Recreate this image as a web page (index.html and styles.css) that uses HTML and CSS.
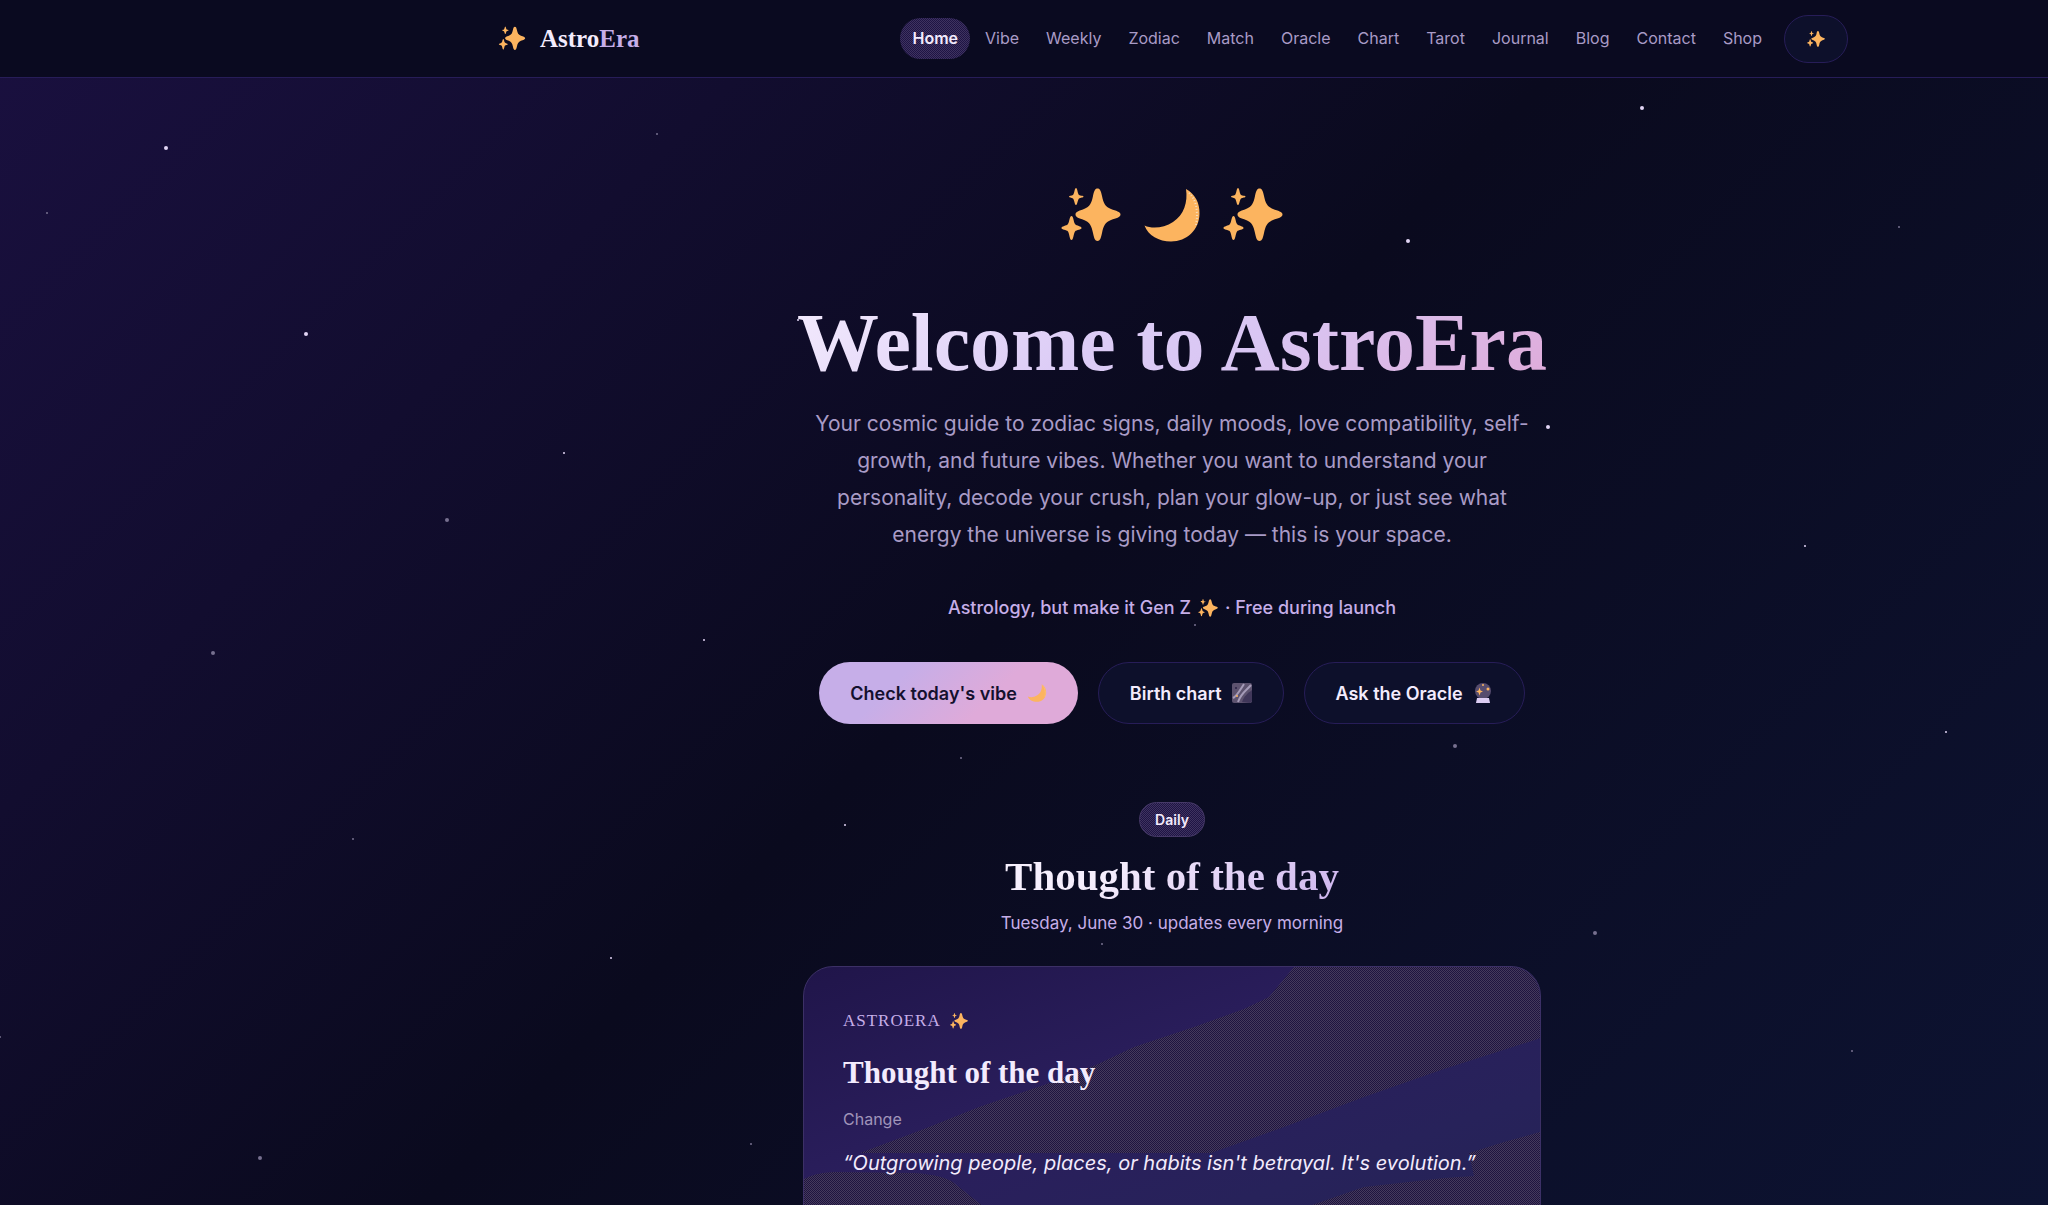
FILE: index.html
```html
<!DOCTYPE html>
<html lang="en">
<head>
    <meta charset="UTF-8">
    <meta name="viewport" content="width=device-width, initial-scale=1.0">
    <title>AstroEra</title>
    <link rel="stylesheet" href="styles.css">
</head>
<body>

    <!-- Shared icons -->
    <svg class="sprite" aria-hidden="true">
        <symbol id="sparkles" viewBox="0 0 60 56">
            <path d="M36.500 1.500C39 1.500 40 4 41 9C42.500 16 44 19.500 50 22C55 24 59.500 24.500 59.500 27.500C59.500 30.500 55 31 50 33C44 35.500 42.500 39 41 46C40 51 39 54 36.500 54C34 54 33 51 32 46C30.500 39 29 35.500 23 33C18 31 14.500 30.500 14.500 27.500C14.500 24.500 18 24 23 22C29 19.500 30.500 16 32 9C33 4 34 1.500 36.500 1.500Z"/>
            <path d="M15 1C16.500 1 16.500 6.500 18 8C19.500 9 22.500 8.500 22.500 9.500C22.500 10.700 19.500 10.500 18 11.500C16.500 13 16.500 18 15 18C13.500 18 13.500 13 12 11.500C10.500 10.500 8 10.700 8 9.500C8 8.500 10.500 9 12 8C13.500 6.500 13.500 1 15 1Z"/>
            <path d="M10.500 29C12.500 29 12.500 35 14 37C15.500 39 20.500 39 20.500 41C20.500 43 15.500 42.500 14 44.500C12.500 46.500 12.500 53 10.500 53C8.500 53 8.500 46.500 7 44.500C5.500 42.500 .500 43 .500 41C.500 39 5.500 39 7 37C8.500 35 8.500 29 10.500 29Z"/>
        </symbol>
        <symbol id="moon" viewBox="0 0 60 56">
            <path d="M44 2C53 7 58 16 57.500 27C57 43 45 54.500 29 54.500C17 54.500 6 48.500 2.500 38.500C10 42 22 41 31 35C42 28 46 15 44 2Z"/>
            <path class="moon-rim" d="M47 6C54 12 56.500 24 54 38" fill="none"/>
        </symbol>
        <symbol id="galaxy" viewBox="0 0 20 20">
            <rect width="20" height="20" rx="2" fill="#5d536f"/>
            <path d="M1 15C5 13 8 7 12 1M6 19C9 10 14 8 19 2" stroke="#a59bb8" stroke-width="2" fill="none"/>
            <path d="M10 19C12 13 16 10 20 7V18L18 20Z" fill="#40375a"/>
            <circle cx="5" cy="13" r="1" fill="#fcb45f"/>
            <circle cx="4" cy="5" r="1" fill="#2a2145"/>
        </symbol>
        <symbol id="crystal" viewBox="0 0 20 20">
            <circle cx="10" cy="8" r="8" fill="#564c6e"/>
            <path d="M4 15H16L17 20H3Z" fill="#dccdf3"/>
            <path d="M6.500 4.500L7.500 7.500L10 8.500L7.500 9.500L6.500 12.500L5.500 9.500L3 8.500L5.500 7.500Z" fill="#fcb45f"/>
            <circle cx="15" cy="6" r="1.500" fill="#fcb45f"/>
            <circle cx="10" cy="2" r="1" fill="#fcb45f"/>
        </symbol>
    </svg>

    <!-- Star field -->
    <svg class="stars" aria-hidden="true">
        <g class="star-bright">
            <circle cx="166" cy="148" r="2"/>
            <circle cx="306" cy="334" r="2"/>
            <circle cx="1408" cy="241" r="2"/>
            <circle cx="1642" cy="108" r="2"/>
            <circle cx="564" cy="453" r="1"/>
            <circle cx="1548" cy="427" r="2"/>
            <circle cx="1805" cy="546" r="1"/>
            <circle cx="704" cy="640" r="1"/>
            <circle cx="1946" cy="732" r="1"/>
            <circle cx="845" cy="825" r="1"/>
            <circle cx="611" cy="958" r="1"/>
            <circle cx="798" cy="320" r="1"/>
        </g>
        <g class="star-dim">
            <circle cx="447" cy="520" r="2"/>
            <circle cx="213" cy="653" r="2"/>
            <circle cx="1455" cy="746" r="2"/>
            <circle cx="1595" cy="933" r="2"/>
            <circle cx="260" cy="1158" r="2"/>
            <circle cx="353" cy="839" r="1"/>
            <circle cx="657" cy="134" r="1"/>
            <circle cx="47" cy="213" r="1"/>
            <circle cx="1899" cy="227" r="1"/>
            <circle cx="1195" cy="625" r="1"/>
            <circle cx="961" cy="758" r="1"/>
            <circle cx="1102" cy="944" r="1"/>
            <circle cx="1852" cy="1051" r="1"/>
            <circle cx="751" cy="1144" r="1"/>
            <circle cx="0" cy="1037" r="1"/>
        </g>
    </svg>

    <header class="site-header">
        <div class="header-inner">
            <a href="#" class="logo">
                <svg class="logo-icon" aria-hidden="true"><use href="#sparkles"/></svg>
                <span>Astro<span class="logo-accent">Era</span></span>
            </a>
            <nav class="nav">
                <a href="#" class="active">Home</a>
                <a href="#">Vibe</a>
                <a href="#">Weekly</a>
                <a href="#">Zodiac</a>
                <a href="#">Match</a>
                <a href="#">Oracle</a>
                <a href="#">Chart</a>
                <a href="#">Tarot</a>
                <a href="#">Journal</a>
                <a href="#">Blog</a>
                <a href="#">Contact</a>
                <a href="#">Shop</a>
                <button type="button" class="theme-toggle" aria-label="Toggle theme">
                    <svg class="icon-sm" aria-hidden="true"><use href="#sparkles"/></svg>
                </button>
            </nav>
        </div>
    </header>

    <main class="main">
        <section class="hero">
            <div class="hero-icons">
                <svg class="icon-lg" aria-hidden="true"><use href="#sparkles"/></svg>
                <svg class="icon-lg" aria-hidden="true"><use href="#moon"/></svg>
                <svg class="icon-lg" aria-hidden="true"><use href="#sparkles"/></svg>
            </div>
            <h1>Welcome to AstroEra</h1>
            <p class="hero-text">Your cosmic guide to zodiac signs, daily moods, love compatibility, self-<br>growth, and future vibes. Whether you want to understand your<br>personality, decode your crush, plan your glow-up, or just see what<br>energy the universe is giving today — this is your space.</p>
            <p class="tagline">Astrology, but make it Gen Z <svg class="icon-md" aria-hidden="true"><use href="#sparkles"/></svg> · Free during launch</p>
            <div class="hero-buttons">
                <a href="#" class="btn btn-primary">Check today's vibe <svg class="icon-md" aria-hidden="true"><use href="#moon"/></svg></a>
                <a href="#" class="btn">Birth chart <svg class="icon-md" aria-hidden="true"><use href="#galaxy"/></svg></a>
                <a href="#" class="btn">Ask the Oracle <svg class="icon-md" aria-hidden="true"><use href="#crystal"/></svg></a>
            </div>
        </section>

        <section class="thought">
            <span class="badge">Daily</span>
            <h2>Thought of the day</h2>
            <p class="date">Tuesday, June 30 · updates every morning</p>

            <article class="card">
                <svg class="card-texture" aria-hidden="true">
                    <defs>
                        <pattern id="grain" width="2" height="2" patternUnits="userSpaceOnUse">
                            <rect width="2" height="2" fill="#1e143f"/>
                            <rect width="1" height="1" fill="#453a5c"/>
                            <rect x="1" y="1" width="1" height="1" fill="#453a5c"/>
                        </pattern>
                    </defs>
                    <path d="M56 186L120 162L175 140L240 118L294 97L330 80L390 60L440 42L465 30L490 0H740V70L640 102L560 130L480 160L407 186Z"/>
                    <path d="M0 212Q10 206 30 205L110 206Q140 208 150 216L180 240V400H0Z"/>
                    <path d="M460 260L508 238L560 220L640 211L670 209L665 186L700 175L740 164V400H460Z"/>
                </svg>
                <div class="card-body">
                    <p class="card-brand">ASTROERA <svg class="icon-sm" aria-hidden="true"><use href="#sparkles"/></svg></p>
                    <h3>Thought of the day</h3>
                    <p class="card-topic">Change</p>
                    <p class="card-quote">“Outgrowing people, places, or habits isn't betrayal. It's evolution.”</p>
                </div>
            </article>
        </section>
    </main>

</body>
</html>
```
FILE: styles.css
```css
* {
    box-sizing: border-box;
    margin: 0;
    padding: 0;
}

:root {
    --sans: Inter, "Open Sans", sans-serif;
    --serif: "Liberation Serif", serif;
    --gold: #fcb45f;
    --lavender: #c6aee8;
    --pink: #dfaad9;
    --text: #f3ebfd;
    --muted: #a99bc6;
    --line: #271d58;
}

body {
    height: 100vh;
    overflow: hidden;
    font-family: var(--sans);
    color: var(--text);
    background: linear-gradient(135deg, #1a1040 0%, #0a0a1e 50%, #0d1332 100%);
}

a {
    color: inherit;
    text-decoration: none;
}

svg {
    fill: var(--gold);
}

.sprite {
    position: absolute;
    width: 0;
    height: 0;
}

.stars {
    position: absolute;
    inset: 0;
    width: 100%;
    height: 100%;
}

.star-bright {
    fill: #e2d5f5;
}

.star-dim {
    fill: #77708f;
}

/* Icon sizes */
.icon-sm {
    width: 18px;
    height: 18px;
}

.icon-md {
    width: 20px;
    height: 20px;
}

.icon-lg {
    width: 60px;
    height: 56px;
}

.moon-rim {
    stroke: #f6ddc0;
    stroke-width: 2;
    stroke-dasharray: 1 2;
}

/* Header */
.site-header {
    position: relative;
    padding-left: 296px;
    background: #0a0a20;
    border-bottom: 1px solid var(--line);
}

.header-inner {
    display: flex;
    align-items: center;
    justify-content: space-between;
    max-width: 1400px;
    height: 77px;
    margin: 0 auto;
    padding: 0 24px;
}

.logo {
    display: flex;
    align-items: center;
    gap: 12px;
    font-family: var(--serif);
    font-size: 25px;
    font-weight: bold;
}

.logo-icon {
    width: 32px;
    height: 25px;
}

.logo-accent {
    color: var(--lavender);
}

.nav {
    display: flex;
    align-items: center;
    gap: 3px;
}

.nav a {
    padding: 0 12px;
    border-radius: 21px;
    color: var(--muted);
    font-size: 16px;
    line-height: 41px;
}

.nav .active {
    color: var(--text);
    font-weight: 600;
    background: repeating-conic-gradient(#3f3360 0 25%, #1e1444 0 50%) 0 0 / 2px 2px;
}

.theme-toggle {
    display: flex;
    align-items: center;
    justify-content: center;
    width: 64px;
    height: 48px;
    margin-left: 7px;
    border: 1px solid var(--line);
    border-radius: 24px;
    background: #0d102b;
}

/* Hero */
.main {
    position: relative;
    padding-left: 296px;
    text-align: center;
}

.hero {
    padding-top: 109px;
}

.hero-icons {
    display: flex;
    justify-content: center;
    gap: 21px;
}

h1,
h2 {
    width: fit-content;
    margin: 0 auto;
    font-family: var(--serif);
    color: transparent;
    background: linear-gradient(135deg, #f3ebfd 0%, #dcccf6 40%, #d9c6f3 60%, #dfaad9 100%);
    background-clip: text;
    -webkit-background-clip: text;
}

h1 {
    margin-top: 44px;
    font-size: 82px;
    line-height: 112px;
}

.hero-text {
    margin-top: 6px;
    color: var(--muted);
    font-size: 21px;
    line-height: 37px;
}

.tagline {
    display: flex;
    align-items: center;
    justify-content: center;
    gap: 7px;
    margin-top: 39px;
    color: var(--lavender);
    font-size: 18px;
    font-weight: 500;
    line-height: 32px;
}

.hero-buttons {
    display: flex;
    justify-content: center;
    gap: 20px;
    margin-top: 38px;
}

.btn {
    display: flex;
    align-items: center;
    gap: 10px;
    height: 62px;
    padding: 0 31px;
    border: 1px solid var(--line);
    border-radius: 31px;
    background: #0d102b;
    font-size: 18px;
    font-weight: 600;
}

.btn-primary {
    border: none;
    color: #14102e;
    background: linear-gradient(135deg, #c6aee8 30%, #dfaad9 65%);
}

/* Thought of the day */
.thought {
    padding-top: 78px;
}

.badge {
    display: block;
    width: fit-content;
    margin: 0 auto;
    padding: 0 15px;
    border: 1px solid #463968;
    border-radius: 18px;
    background: repeating-conic-gradient(#3f3360 0 25%, #1e1444 0 50%) 0 0 / 2px 2px;
    font-size: 14px;
    font-weight: 600;
    line-height: 33px;
}

h2 {
    margin-top: 11px;
    background-image: linear-gradient(135deg, #f6effd 30%, #cdb4ee 100%);
    font-size: 41px;
    line-height: 56px;
}

.date {
    margin-top: 5px;
    color: var(--lavender);
    font-size: 17px;
    line-height: 28px;
}

.card {
    position: relative;
    max-width: 738px;
    margin: 29px auto 0;
    border: 1px solid #3c3066;
    border-radius: 30px;
    overflow: hidden;
    background: linear-gradient(160deg, #20154a 0%, #2a1e5c 40%, #27225a 70%, #242354 100%);
    text-align: left;
}

.card-texture {
    position: absolute;
    inset: 0;
    width: 100%;
    height: 100%;
    fill: url(#grain);
}

.card-body {
    position: relative;
    padding: 38px 39px 80px;
}

.card-brand {
    display: flex;
    align-items: center;
    gap: 9px;
    color: var(--lavender);
    font-family: var(--serif);
    font-size: 17px;
    letter-spacing: 1px;
    line-height: 32px;
}

h3 {
    margin-top: 14px;
    font-family: var(--serif);
    font-size: 31px;
    line-height: 44px;
}

.card-topic {
    margin-top: 10px;
    color: #a095ba;
    font-size: 16px;
    line-height: 28px;
}

.card-quote {
    margin-top: 12px;
    font-size: 20px;
    font-style: italic;
    line-height: 36px;
}
```
